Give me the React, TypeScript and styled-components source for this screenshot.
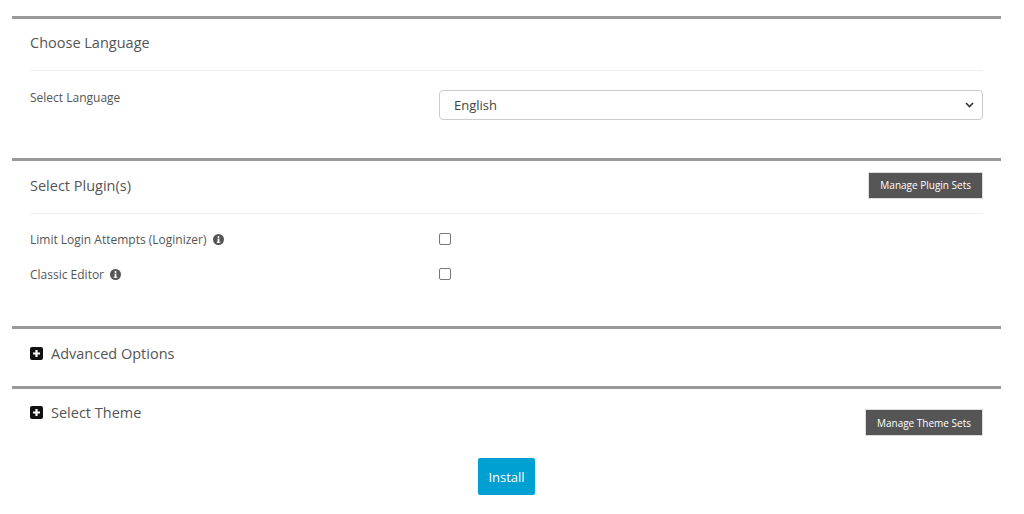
import React from "react";
import styled, { createGlobalStyle } from "styled-components";

const G = createGlobalStyle`
  body { margin: 0; background: #fff; font-family: "Open Sans", sans-serif; color: #555; }
`;
const Page = styled.div`padding: 16px 23px 0 12px;`;
const Section = styled.div<{ h: number }>`
  border-top: 3px solid #999;
  height: ${p => p.h}px;
  padding: 0 18px;
  box-sizing: border-box;
`;
const Head = styled.div<{ h: number; line?: boolean }>`
  height: ${p => p.h}px;
  box-sizing: border-box;
  padding-bottom: 4px;
  display: flex; align-items: center; justify-content: space-between;
  border-bottom: ${p => (p.line ? "1px solid #eee" : "none")};
`;
const Title = styled.div`font-size: 14.5px; color: #555; display: flex; align-items: center; gap: 8px;`;
const Row = styled.div<{ h: number }>`
  display: grid; grid-template-columns: 409px 1fr; align-items: center; height: ${p => p.h}px;
`;
const Label = styled.div`font-size: 12px; color: #555; display: flex; align-items: center; gap: 6px;`;
const Select = styled.div`
  height: 28px; border: 1px solid #ccc; border-radius: 4px; display: flex; align-items: center;
  justify-content: space-between; padding: 0 8px 0 14px; font-size: 13px; color: #444;
`;
const Box = styled.span`width: 10px; height: 10px; border: 1px solid #777; border-radius: 2px; display: block;`;
const DarkBtn = styled.div`
  background: #555; color: #fff; font-size: 10px; padding: 0 11px; height: 25px;
  display: flex; align-items: center; border: 1px solid #ddd;
`;
const Install = styled.div`
  width: 57px; height: 37px; margin: 12px 0 0 466px; background: #00a0d2; color: #fff;
  border-radius: 2px; display: flex; align-items: center; justify-content: center; font-size: 13px;
`;
const Plus = () => (
  <svg width="13" height="13" viewBox="0 0 13 13"><rect width="13" height="13" rx="2" fill="#111" /><path d="M6.5 3v7M3 6.5h7" stroke="#fff" strokeWidth="2.2" /></svg>
);
const Info = () => (
  <svg width="11" height="11" viewBox="0 0 12 12"><circle cx="6" cy="6" r="6" fill="#555" /><rect x="5" y="5" width="2" height="4.5" fill="#fff" /><rect x="4" y="8.5" width="4" height="1" fill="#fff" /><circle cx="6" cy="3.2" r="1.1" fill="#fff" /></svg>
);

export default function App() {
  return (
    <Page>
      <G />
      <Section h={142}>
        <Head h={52} line><Title>Choose Language</Title></Head>
        <Row h={52} style={{ alignItems: "start", paddingTop: 19, boxSizing: "border-box" }}>
          <Label style={{ marginTop: -1 }}>Select Language</Label>
          <Select>English<svg width="9" height="6" viewBox="0 0 9 6"><path d="M1 1l3.5 3.5L8 1" stroke="#333" strokeWidth="1.6" fill="none" /></svg></Select>
        </Row>
      </Section>
      <Section h={168}>
        <Head h={53} line><Title>Select Plugin(s)</Title><DarkBtn>Manage Plugin Sets</DarkBtn></Head>
        <Row h={20} style={{ marginTop: 15 }}><Label>Limit Login Attempts (Loginizer) <Info /></Label><Box /></Row>
        <Row h={20} style={{ marginTop: 15 }}><Label>Classic Editor <Info /></Label><Box /></Row>
      </Section>
      <Section h={60}>
        <Head h={52}><Title><Plus />Advanced Options</Title></Head>
      </Section>
      <Section h={60}>
        <Head h={50} style={{ alignItems: "flex-start" }}>
          <Title style={{ marginTop: 14 }}><Plus />Select Theme</Title>
          <DarkBtn style={{ marginTop: 20 }}>Manage Theme Sets</DarkBtn>
        </Head>
      </Section>
      <Install>Install</Install>
    </Page>
  );
}
